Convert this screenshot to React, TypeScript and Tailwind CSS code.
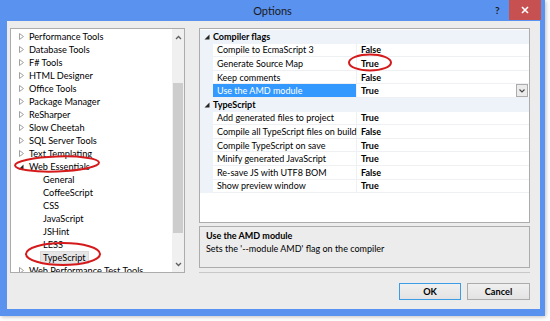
import React from "react";

const treeItems: { t: string; lvl: number; state: "closed" | "open" | "leaf"; sel?: boolean }[] = [
  { t: "Performance Tools", lvl: 1, state: "closed" },
  { t: "Database Tools", lvl: 1, state: "closed" },
  { t: "F# Tools", lvl: 1, state: "closed" },
  { t: "HTML Designer", lvl: 1, state: "closed" },
  { t: "Office Tools", lvl: 1, state: "closed" },
  { t: "Package Manager", lvl: 1, state: "closed" },
  { t: "ReSharper", lvl: 1, state: "closed" },
  { t: "Slow Cheetah", lvl: 1, state: "closed" },
  { t: "SQL Server Tools", lvl: 1, state: "closed" },
  { t: "Text Templating", lvl: 1, state: "closed" },
  { t: "Web Essentials", lvl: 1, state: "open" },
  { t: "General", lvl: 2, state: "leaf" },
  { t: "CoffeeScript", lvl: 2, state: "leaf" },
  { t: "CSS", lvl: 2, state: "leaf" },
  { t: "JavaScript", lvl: 2, state: "leaf" },
  { t: "JSHint", lvl: 2, state: "leaf" },
  { t: "LESS", lvl: 2, state: "leaf" },
  { t: "TypeScript", lvl: 2, state: "leaf", sel: true },
  { t: "Web Performance Test Tools", lvl: 1, state: "closed" },
];

type Row = { cat?: boolean; name: string; value?: string; sel?: boolean };
const rows: Row[] = [
  { cat: true, name: "Compiler flags" },
  { name: "Compile to EcmaScript 3", value: "False" },
  { name: "Generate Source Map", value: "True" },
  { name: "Keep comments", value: "False" },
  { name: "Use the AMD module", value: "True", sel: true },
  { cat: true, name: "TypeScript" },
  { name: "Add generated files to project", value: "True" },
  { name: "Compile all TypeScript files on build", value: "False" },
  { name: "Compile TypeScript on save", value: "True" },
  { name: "Minify generated JavaScript", value: "True" },
  { name: "Re-save JS with UTF8 BOM", value: "False" },
  { name: "Show preview window", value: "True" },
];

function ClosedArrow() {
  return (
    <svg width="5" height="7" viewBox="0 0 5 7" className="shrink-0">
      <path d="M0.5 0.5 L4.5 3.5 L0.5 6.5 Z" fill="none" stroke="#a0a0a0" strokeWidth="1" />
    </svg>
  );
}
function OpenArrow() {
  return (
    <svg width="6" height="6" viewBox="0 0 6 6" className="shrink-0">
      <path d="M5.5 0.5 L5.5 5.5 L0.5 5.5 Z" fill="#262626" />
    </svg>
  );
}

export default function App() {
  return (
    <div className="relative w-[550px] h-[321px] bg-white font-['Lato',sans-serif] text-black overflow-hidden">
      <div className="w-[545px] h-[316px] bg-[#5a92ef] flex flex-col shadow-[1px_1px_4px_rgba(0,0,0,0.25)]">
        {/* title bar */}
        <div className="h-[21px] relative flex items-center justify-center shrink-0">
          <span className="text-[11px] text-[#1a1a1a] leading-none">Options</span>
          <span className="absolute left-[495px] top-[3px] text-[10px] font-bold text-[#1a1a1a]">?</span>
          <div className="absolute left-[509px] top-0 w-[32px] h-[20px] bg-[#c75050] flex items-center justify-center">
            <svg width="8" height="8" viewBox="0 0 8 8">
              <path d="M1 1 L7 7 M7 1 L1 7" stroke="white" strokeWidth="1.6" />
            </svg>
          </div>
        </div>
        {/* content */}
        <div className="flex-1 ml-[7px] mr-[5px] mb-[7px] bg-[#ececec] flex flex-col pl-[3px] pr-[10px] pt-[7px]">
          <div className="flex gap-[14px]">
            {/* tree */}
            <div className="w-[175px] h-[245px] border border-[#acacac] bg-white flex overflow-hidden">
              <div className="flex-1 pt-[1px] overflow-hidden">
                {treeItems.map((it, i) => (
                  <div key={i} className="h-[13px] flex items-center whitespace-nowrap text-[9.2px] leading-none">
                    {it.lvl === 1 ? (
                      <>
                        <div className="w-[18px] flex justify-end pr-[5px]">
                          {it.state === "open" ? <OpenArrow /> : <ClosedArrow />}
                        </div>
                        <span>{it.t}</span>
                      </>
                    ) : (
                      <div className="pl-[32px] flex">
                        <span
                          className={
                            it.sel
                              ? "bg-[#e5e5e5] border border-[#dadada] px-[2px] -ml-[3px] h-[13px] flex items-center"
                              : ""
                          }
                        >
                          {it.t}
                        </span>
                      </div>
                    )}
                  </div>
                ))}
              </div>
              {/* scrollbar */}
              <div className="w-[12px] bg-[#f0f0f0] flex flex-col items-center">
                <div className="h-[16px] flex items-center justify-center">
                  <svg width="7" height="5" viewBox="0 0 7 5">
                    <path d="M1 4 L3.5 1.5 L6 4" fill="none" stroke="#606060" strokeWidth="1.3" />
                  </svg>
                </div>
                <div className="mt-[38px] w-[10px] h-[150px] bg-[#cdcdcd]" />
                <div className="flex-1" />
                <div className="h-[16px] flex items-center justify-center">
                  <svg width="7" height="5" viewBox="0 0 7 5">
                    <path d="M1 1 L3.5 3.5 L6 1" fill="none" stroke="#606060" strokeWidth="1.3" />
                  </svg>
                </div>
              </div>
            </div>
            {/* right */}
            <div className="flex-1 flex flex-col">
              <div className="h-[195px] border border-[#acacac] bg-white pt-[1px] overflow-hidden">
                {rows.map((r, i) =>
                  r.cat ? (
                    <div key={i} className="h-[13.6px] flex items-center bg-[#eef3fa] text-[9px] leading-none">
                      <div className="w-[13px] flex justify-center">
                        <OpenArrow />
                      </div>
                      <span className="font-bold">{r.name}</span>
                    </div>
                  ) : (
                    <div key={i} className="h-[13.6px] flex text-[9px] leading-none">
                      <div className="w-[13px] bg-[#eef3fa]" />
                      <div
                        className={
                          "w-[144px] flex items-center pl-[4px] whitespace-nowrap border-b border-r border-[#eef0f4] " +
                          (r.sel ? "bg-[#3399ff] text-white" : "")
                        }
                      >
                        {r.name}
                      </div>
                      <div className="flex-1 flex items-center pl-[4px] font-bold border-b border-[#eef0f4] relative">
                        {r.value}
                        {r.sel && (
                          <div className="absolute right-[1px] top-[0px] w-[12px] h-[13px] bg-[#ebebeb] border border-[#acacac] flex items-center justify-center">
                            <svg width="6" height="4" viewBox="0 0 6 4">
                              <path d="M0.5 0.5 L3 3 L5.5 0.5" fill="none" stroke="#444" strokeWidth="1.1" />
                            </svg>
                          </div>
                        )}
                      </div>
                    </div>
                  )
                )}
              </div>
              <div className="mt-[3px] h-[42px] border border-[#acacac] bg-[#ececec] px-[6px] pt-[2px] text-[9px] leading-[13px]">
                <div className="font-bold">Use the AMD module</div>
                <div>Sets the '--module AMD' flag on the compiler</div>
              </div>
              <div className="mt-[4px] h-[1px] bg-[#c8c8c8]" />
            </div>
          </div>
          {/* buttons */}
          <div className="mt-[10px] flex justify-end gap-[6px]">
            <div className="w-[62px] h-[17px] border border-[#3c9ce6] bg-gradient-to-b from-[#f0f0f0] to-[#e3e3e3] flex items-center justify-center text-[9.2px] font-bold leading-none">
              OK
            </div>
            <div className="w-[63px] h-[17px] border border-[#acacac] bg-gradient-to-b from-[#f0f0f0] to-[#e3e3e3] flex items-center justify-center text-[9.2px] font-bold leading-none">
              Cancel
            </div>
          </div>
        </div>
      </div>
      {/* annotations */}
      <svg className="absolute left-0 top-0 pointer-events-none" width="550" height="321">
        <ellipse cx="57" cy="164" rx="42" ry="7.5" fill="none" stroke="#d41a1a" strokeWidth="2" transform="rotate(-2 57 164)" />
        <ellipse cx="63" cy="254" rx="37" ry="11" fill="none" stroke="#d41a1a" strokeWidth="2" />
        <ellipse cx="370" cy="62.5" rx="21" ry="8" fill="none" stroke="#d41a1a" strokeWidth="2" />
      </svg>
    </div>
  );
}
